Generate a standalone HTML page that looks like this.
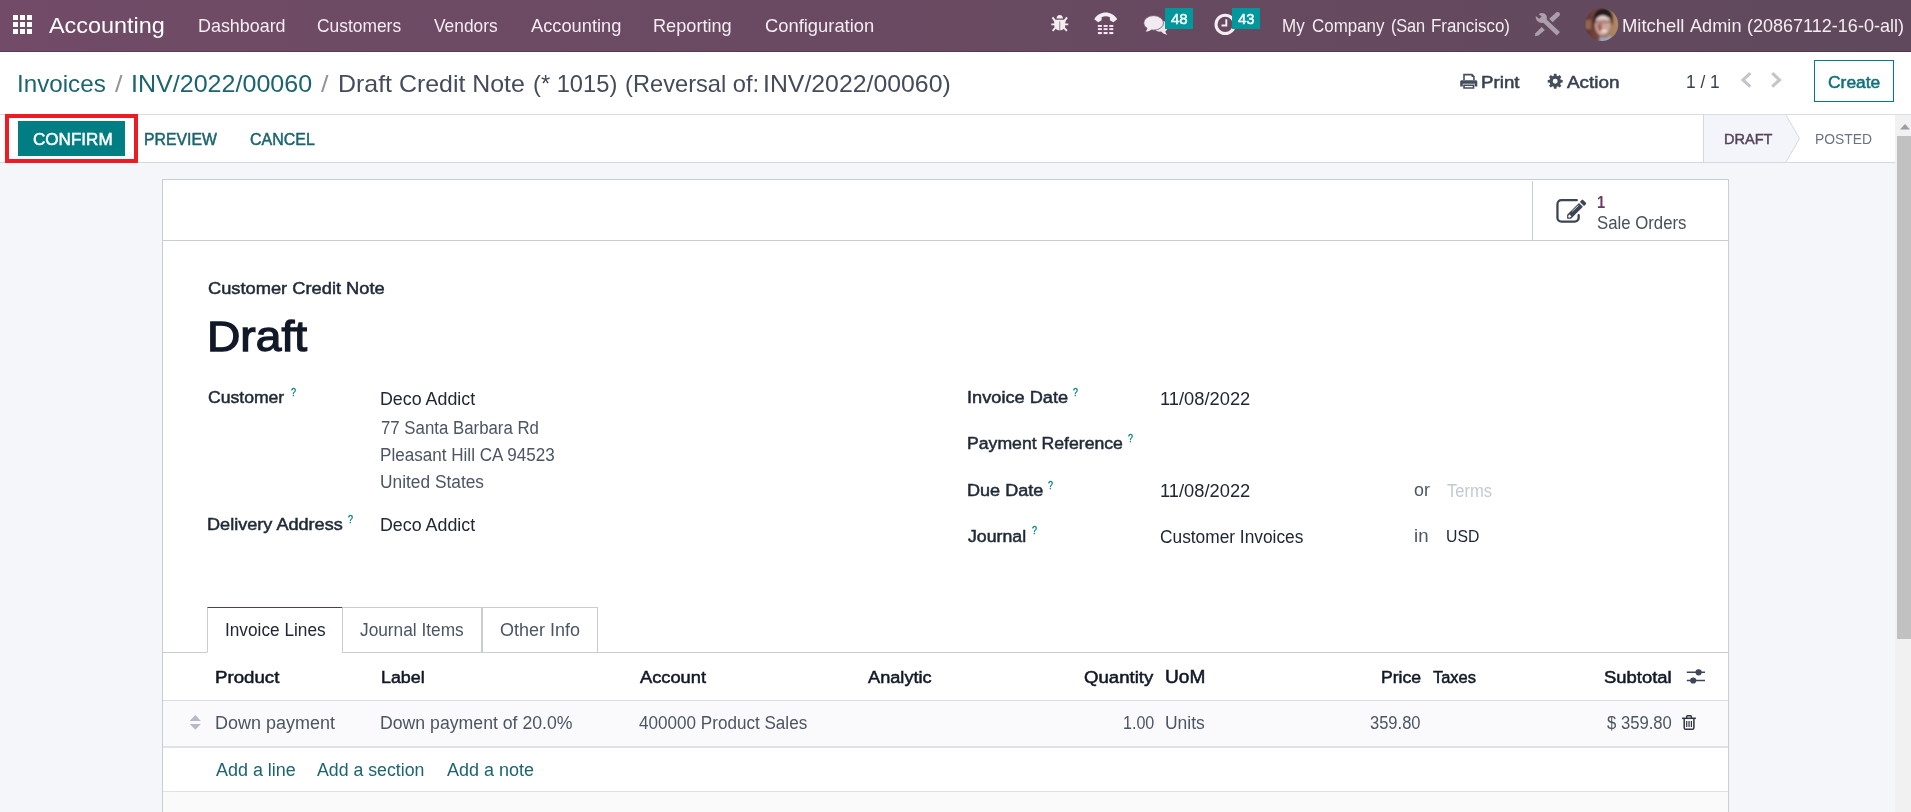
<!DOCTYPE html>
<html lang="en"><head><meta charset="utf-8"><title>Odoo - Draft Credit Note</title>
<style>
*{box-sizing:border-box;margin:0;padding:0}
html,body{width:1911px;height:812px;overflow:hidden;background:#f5f6fa;font-family:"Liberation Sans",sans-serif}
body{position:relative}
.t{position:absolute;white-space:pre;line-height:1;transform-origin:0 0;font-family:"Liberation Sans",sans-serif}
.b{position:absolute}
svg{position:absolute;overflow:visible}
.sb{-webkit-text-stroke:.03em currentColor}

</style></head>
<body>
<!-- navbar -->
<div class="b" style="left:0;top:0;width:1911px;height:52px;background:linear-gradient(to right,#714b67 0%,#60495c 100%);border-bottom:1px solid rgba(40,10,35,.28)"></div>
<!-- apps icon -->
<svg style="left:13px;top:15px" width="19" height="19" viewBox="0 0 19 19" fill="#fff">
<rect x="0" y="0" width="5" height="5"/><rect x="7" y="0" width="5" height="5"/><rect x="14" y="0" width="5" height="5"/>
<rect x="0" y="7" width="5" height="5"/><rect x="7" y="7" width="5" height="5"/><rect x="14" y="7" width="5" height="5"/>
<rect x="0" y="14" width="5" height="5"/><rect x="7" y="14" width="5" height="5"/><rect x="14" y="14" width="5" height="5"/>
</svg>


<!-- navbar icons (page coordinates) -->
<svg style="left:0;top:0" width="1911" height="52" viewBox="0 0 1911 52">
 <!-- bug -->
 <g fill="#f4eef2" stroke="#f4eef2">
  <path d="M1056.6 18.6A3.1 3.6 0 0 1 1062.9 18.6Z" stroke="none"/>
  <path d="M1054.2 19.800H1065.3V24.800C1065.3 28.300 1062.900 30.300 1059.750 30.300C1056.600 30.300 1054.200 28.300 1054.200 24.800Z" stroke="none"/>
  <g stroke-width="1.9" fill="none" stroke-linecap="butt">
   <path d="M1055.3 21.4L1052.5 17.400M1064.2 21.4L1067 17.400"/>
   <path d="M1051.3 24.4H1055M1064.5 24.4H1068.2"/>
   <path d="M1055.8 27.3L1052.6 30.9M1063.7 27.3L1066.9 30.9"/>
  </g>
 </g>
 <path d="M1059.75 21.6V30" stroke="#a58b7f" stroke-width="1.1" fill="none"/>
 <!-- phone -->
 <g fill="#f4eef2">
  <path d="M1094.3 19.2C1099.5 10.4 1111.9 10.4 1117.2 19.2L1113.4 22.2L1109.9 20.3V17.2C1107.5 16 1104 16 1101.6 17.2V20.3L1098.1 22.2Z"/>
  <g fill="#fbeaf3">
  <rect x="1097.9" y="25" width="4" height="1.9"/><rect x="1103.6" y="25" width="4" height="1.9"/><rect x="1109.3" y="25" width="4" height="1.9"/>
  <rect x="1097.9" y="28.2" width="4" height="1.9"/><rect x="1103.6" y="28.2" width="4" height="1.9"/><rect x="1109.3" y="28.2" width="4" height="1.9"/>
  <rect x="1097.9" y="32" width="4" height="2.1"/><rect x="1103.6" y="32" width="4" height="2.1"/><rect x="1109.3" y="32" width="4" height="2.1"/>
  </g>
 </g>
 <!-- comments -->
 <g fill="#f1eaf0">
  <path d="M1152.5 24.5C1152.5 29.5 1157 32.2 1161.2 31.6C1162.6 33.3 1164.8 34.5 1167.3 34.9C1166.2 33.8 1165.6 32.6 1165.4 31.2C1167 30 1168 28.4 1168 26.5C1168 22.5 1164 20.6 1160 20.6Z" fill="#efe6ed"/>
  <ellipse cx="1153.6" cy="22.9" rx="9.9" ry="7.3" stroke="#6a4a62" stroke-width="0.8"/>
  <path d="M1147.6 27.5C1147.4 29.2 1146.5 30.5 1145.6 31.6C1148 31.4 1150.2 30.6 1151.8 29.2Z"/>
 </g>
 <!-- clock -->
 <circle cx="1225.2" cy="24.4" r="9.2" fill="none" stroke="#f4eef2" stroke-width="3"/>
 <path d="M1226.3 19.2V25.5H1221.5" fill="none" stroke="#f4eef2" stroke-width="1.9"/>
 <!-- studio icon -->
 <g fill="#ab9fab">
  <path d="M1538.6 14.2C1541 12.4 1544.6 12.6 1546.2 15.3C1547 16.8 1547 18.2 1546.6 19.4L1559.9 31.9L1556.8 35.6L1543.3 22.8C1541.7 23.3 1539.6 23 1538 21.6C1536.3 20.1 1535.4 18 1535.8 15.9L1539.2 18.8L1541.8 16.6Z"/>
  <path d="M1556.4 12.2C1557.9 11.4 1559.6 12.3 1559.9 13.7C1560.1 14.6 1559.9 15.2 1559.4 15.8L1552.6 22.2L1549.2 18.8Z"/>
  <path d="M1541.6 26.9L1544.9 30L1538.4 35.4L1534.9 36.3L1535.4 33.2Z"/>
 </g>
 <!-- avatar -->
 <defs><filter id="avblur" x="-10%" y="-10%" width="120%" height="120%"><feGaussianBlur stdDeviation="0.9"/></filter><clipPath id="av"><circle cx="1601.7" cy="24.4" r="16.5"/></clipPath>
 <linearGradient id="avbg" x1="0" x2="1" y1="0" y2="0"><stop offset="0" stop-color="#5a2f30"/><stop offset=".45" stop-color="#7a4a3f"/><stop offset=".7" stop-color="#a9805f"/><stop offset="1" stop-color="#b58d68"/></linearGradient></defs>
 <g clip-path="url(#av)">
  <g filter="url(#avblur)">
  <rect x="1581" y="3" width="42" height="43" fill="url(#avbg)"/>
  <rect x="1585" y="20" width="6" height="9" fill="#a37a5c" opacity=".7"/>
  <path d="M1594 25C1591.500 12 1598.500 7.500 1604.500 8.200C1611.500 9 1614 15 1612.800 26L1610 18C1606 14.500 1599.500 14.500 1596.500 19Z" fill="#241a20"/>
  <ellipse cx="1602.600" cy="25.500" rx="7.600" ry="10.200" fill="#c9a599"/>
  <path d="M1595.500 20.500C1598 14.500 1607.500 14.500 1610 20.500C1607 18.300 1599 18.300 1595.500 20.500Z" fill="#e4d6d2"/>
  <path d="M1595.500 22.300H1610" stroke="#6a4a48" stroke-width="1.500" opacity=".65"/>
  <path d="M1597 24.500L1601.500 23.500L1602 31.500L1598.500 30.500Z" fill="#9b3f3c" opacity=".75"/>
  <ellipse cx="1604" cy="31" rx="3" ry="1.500" fill="#ecdedb"/>
  <path d="M1599 43L1600 36C1602.500 38.200 1607 37.800 1609.500 34.800L1615.500 43Z" fill="#a2a4b6"/>
  </g>
 </g>
</svg>

<!-- badges -->
<div class="b" style="left:1165px;top:8px;width:28px;height:21px;background:#00979d"></div>
<div class="b" style="left:1232px;top:8px;width:28px;height:21px;background:#00979d"></div>

<!-- control panel -->
<div class="b" style="left:0;top:52px;width:1911px;height:63px;background:#fff;border-bottom:1px solid #d9dce1"></div>

<!-- control panel icons -->
<svg style="left:0;top:52px" width="1911" height="63" viewBox="0 52 1911 63">
 <!-- print -->
 <g fill="#444e5c">
  <path d="M1463.200 73.800H1472.300L1474.700 76.200V80H1473.100V77H1471.500V75.400H1464.800V80H1463.200Z"/>
  <path d="M1461.700 80.300H1475.800C1476.700 80.300 1477.300 81 1477.300 81.800V86.600H1474.700V83.800H1462.800V86.600H1460.200V81.800C1460.200 81 1460.800 80.300 1461.700 80.300Z"/>
  <path d="M1463.200 84.600H1474.300V88.800H1463.200ZM1464.800 86V87.300H1472.700V86Z" fill-rule="evenodd"/>
 </g>
 <!-- gear -->
 <g transform="translate(1555.200 81.300)" fill="#444e5c">
  <path fill-rule="evenodd" d="M-1.47 -5.51L-1.29 -7.49L1.29 -7.49L1.47 -5.51L2.86 -4.93L4.39 -6.21L6.21 -4.39L4.93 -2.86L5.51 -1.47L7.49 -1.29L7.49 1.29L5.51 1.47L4.93 2.86L6.21 4.39L4.39 6.21L2.86 4.93L1.47 5.51L1.29 7.49L-1.29 7.49L-1.47 5.51L-2.86 4.93L-4.39 6.21L-6.21 4.39L-4.93 2.86L-5.51 1.47L-7.49 1.29L-7.49 -1.29L-5.51 -1.47L-4.93 -2.86L-6.21 -4.39L-4.39 -6.21L-2.86 -4.93ZM0 -2.45A2.45 2.45 0 1 0 0 2.45A2.45 2.45 0 1 0 0 -2.45Z"/>
 </g>
 <!-- pager chevrons -->
 <g fill="none" stroke="#c4c4cc" stroke-width="3.1" stroke-linejoin="miter">
  <path d="M1750.300 73.200L1743 79.950L1750.300 86.700"/>
  <path d="M1772.200 73.200L1779.500 79.950L1772.200 86.700"/>
 </g>
</svg>

<!-- create button -->
<div class="b" style="left:1814px;top:60px;width:80px;height:42px;border:1px solid #017e84;background:#fff"></div>

<!-- status bar -->
<div class="b" style="left:0;top:115px;width:1895px;height:48px;background:#fff;border-bottom:1px solid #d5d8de"></div>
<!-- red highlight -->
<div class="b" style="left:5px;top:114px;width:132.9px;height:48.6px;border:4.8px solid #ed1c24"></div>
<!-- confirm button -->
<div class="b" style="left:18px;top:121.2px;width:107px;height:34.4px;background:#017e84"></div>
<!-- status pills -->
<div class="b" style="left:1703px;top:115px;width:192px;height:47px;background:#fff;border-left:1px solid #d5d8de"></div>
<svg style="left:1703px;top:115px" width="100" height="47" viewBox="0 0 100 47">
<path d="M1 0H83L96.5 23.5L83 47H1Z" fill="#f4f5fa"/>
<path d="M83 0L96.5 23.5L83 47" fill="none" stroke="#d5d8de" stroke-width="1"/>
</svg>

<!-- scrollbar -->
<div class="b" style="left:1895px;top:115px;width:16px;height:697px;background:#f1f1f1"></div>
<div class="b" style="left:1897px;top:136px;width:14px;height:503px;background:#c1c1c1"></div>
<svg style="left:1900px;top:124px" width="10" height="6" viewBox="0 0 10 6"><path d="M0 5.5L5 0L10 5.5Z" fill="#a19ba5"/></svg>

<!-- sheet -->
<div class="b" style="left:162px;top:179px;width:1567px;height:640px;background:#fff;border:1px solid #c8ccd3"></div>
<!-- button box bottom -->
<div class="b" style="left:163px;top:240px;width:1565px;height:1px;background:#c8ccd3"></div>
<div class="b" style="left:1532px;top:181px;width:1px;height:59px;background:#c8ccd3"></div>

<!-- tabs -->
<div class="b" style="left:163px;top:652px;width:1565px;height:1px;background:#c8ccd3"></div>
<div class="b" style="left:207px;top:607px;width:136px;height:46px;background:#fff;border:1px solid #c8ccd3;border-top:1px solid #5a3b53;border-bottom:1px solid #fff"></div>
<div class="b" style="left:342px;top:607px;width:140px;height:46px;border:1px solid #c8ccd3"></div>
<div class="b" style="left:482px;top:607px;width:116px;height:46px;border:1px solid #c8ccd3"></div>

<!-- table -->
<div class="b" style="left:163px;top:700px;width:1565px;height:1px;background:#d9dce1"></div>
<div class="b" style="left:163px;top:701px;width:1565px;height:45px;background:#fafafc"></div>
<div class="b" style="left:163px;top:746px;width:1565px;height:2px;background:#dfe2e7"></div>
<div class="b" style="left:163px;top:791px;width:1565px;height:1px;background:#dfe2e7"></div>
<div class="b" style="left:163px;top:792px;width:1565px;height:20px;background:#fafafb"></div>

<!-- sheet icons -->
<svg style="left:0;top:180px" width="1911" height="632" viewBox="0 180 1911 632">
 <!-- pencil-square-o -->
 <g>
  <path d="M1576.800 200.200H1561.400A3.950 3.950 0 0 0 1557.450 204.150V217.750A3.950 3.950 0 0 0 1561.400 221.700H1574.700A3.950 3.950 0 0 0 1578.650 217.750V215.200" fill="none" stroke="#3d4452" stroke-width="2.3" stroke-linecap="round"/>
  <path d="M1567.100 214.800L1579 202.900L1582.900 206.800L1571 218.700H1567.100Z" fill="#3d4452"/>
  <path d="M1579.900 201.900L1581.500 200.200C1582 199.600 1582.800 199.600 1583.400 200.200L1585.700 202.500C1586.300 203.100 1586.300 203.900 1585.700 204.400L1584 206.100Z" fill="#3d4452"/>
  <path d="M1568.300 215.700L1569.600 214.500L1571.300 216.200L1570.100 217.500H1568.300Z" fill="#fff"/>
  <path d="M1572.300 211.300L1578.500 205.400" stroke="#fff" stroke-width=".8" fill="none"/>
 </g>
 <!-- row handle -->
 <path d="M195.300 715.100L200.900 720.900H189.700ZM189.700 724H200.900L195.300 729.700Z" fill="#b4bac6"/>
 <!-- optional columns sliders -->
 <g stroke="#3f4757" stroke-width="1.5" fill="#3f4757">
  <path d="M1686.800 672.300H1705M1686.800 680.500H1705" fill="none"/>
  <circle cx="1698.600" cy="672.300" r="2.600" stroke="none" /><circle cx="1698.600" cy="672.300" r="3.100" stroke="none"/>
  <circle cx="1693.200" cy="680.500" r="3.100" stroke="none"/>
 </g>
 <!-- trash -->
 <g fill="none" stroke="#2f3542" stroke-width="1.500">
  <path d="M1682.100 718.300H1695.900"/>
  <path d="M1686.700 718V716.600C1686.700 716 1687.100 715.700 1687.600 715.700H1690.500C1691 715.700 1691.400 716 1691.400 716.600V718"/>
  <path d="M1684.200 718.600V727.700C1684.200 728.700 1684.900 729.300 1685.800 729.300H1692.300C1693.200 729.300 1693.900 728.700 1693.900 727.700V718.600"/>
  <path d="M1686.700 721V727M1689.050 721V727M1691.400 721V727" stroke-width="1.200"/>
 </g>
</svg>

<!-- text layer -->
<span id="brand" class="t" style="left:49.20px;top:15px;font-size:21.8px;color:#ffffff;transform:scaleX(1.0738)">Accounting</span>
<span id="m1" class="t" style="left:197.52px;top:17px;font-size:18.2px;color:#f3edf1;transform:scaleX(0.9843)">Dashboard</span>
<span id="m2" class="t" style="left:317.00px;top:17px;font-size:18.2px;color:#f3edf1;transform:scaleX(0.9564)">Customers</span>
<span id="m3" class="t" style="left:434.30px;top:17px;font-size:18.2px;color:#f3edf1;transform:scaleX(0.9543)">Vendors</span>
<span id="m4" class="t" style="left:531.30px;top:17px;font-size:18.2px;color:#f3edf1;transform:scaleX(1.0037)">Accounting</span>
<span id="m5" class="t" style="left:653.40px;top:17px;font-size:18.2px;color:#f3edf1;transform:scaleX(0.9981)">Reporting</span>
<span id="m6" class="t" style="left:764.70px;top:17px;font-size:18.2px;color:#f3edf1;transform:scaleX(1.0096)">Configuration</span>
<span id="b48" class="t sb" style="left:1171.00px;top:12px;font-size:14.6px;color:#ffffff;transform:scaleX(1.0300)">48</span>
<span id="b43" class="t sb" style="left:1238.10px;top:12px;font-size:14.6px;color:#ffffff;transform:scaleX(1.0114)">43</span>
<span id="comp1" class="t" style="left:1281.56px;top:17px;font-size:18.2px;color:#f3edf1;transform:scaleX(0.9358)">My</span>
<span id="comp2" class="t" style="left:1312.20px;top:17px;font-size:18.2px;color:#f3edf1;transform:scaleX(0.9309)">Company</span>
<span id="comp3" class="t" style="left:1391.30px;top:17px;font-size:18.2px;color:#f3edf1;transform:scaleX(0.9000);letter-spacing:-0.138px">(San</span>
<span id="comp4" class="t" style="left:1430.67px;top:17px;font-size:18.2px;color:#f3edf1;transform:scaleX(0.9296)">Francisco)</span>
<span id="user1" class="t" style="left:1622.49px;top:17px;font-size:18.2px;color:#f3edf1;transform:scaleX(1.0133)">Mitchell</span>
<span id="user2" class="t" style="left:1690.40px;top:17px;font-size:18.2px;color:#f3edf1;transform:scaleX(0.9993)">Admin</span>
<span id="user3" class="t" style="left:1746.91px;top:17px;font-size:18.2px;color:#f3edf1;transform:scaleX(0.9908)">(20867112-16-0-all)</span>
<span id="bc1" class="t" style="left:17.05px;top:73px;font-size:23.6px;color:#1b6470;transform:scaleX(1.0256)">Invoices</span>
<span id="bs1" class="t" style="left:114.50px;top:73px;font-size:23.6px;color:#8f959e;transform:scaleX(1.1429)">/</span>
<span id="bc2" class="t" style="left:130.58px;top:73px;font-size:23.6px;color:#1b6470;transform:scaleX(1.0623)">INV/2022/00060</span>
<span id="bs2" class="t" style="left:321.00px;top:73px;font-size:23.6px;color:#8f959e;transform:scaleX(1.1429)">/</span>
<span id="bc3a" class="t" style="left:338.44px;top:73px;font-size:23.6px;color:#444b5a;transform:scaleX(1.0558)">Draft Credit Note</span>
<span id="bc3b" class="t" style="left:533.40px;top:73px;font-size:23.6px;color:#444b5a;transform:scaleX(1.0039)">(* 1015)</span>
<span id="bc3c" class="t" style="left:625.00px;top:73px;font-size:23.6px;color:#444b5a;transform:scaleX(1.0032)">(Reversal of:</span>
<span id="bc3d" class="t" style="left:763.10px;top:73px;font-size:23.6px;color:#444b5a;transform:scaleX(1.0522)">INV/2022/00060)</span>
<span id="print" class="t sb" style="left:1480.92px;top:74px;font-size:17.4px;color:#374151;transform:scaleX(1.0766)">Print</span>
<span id="action" class="t sb" style="left:1567.00px;top:74px;font-size:17.4px;color:#374151;transform:scaleX(1.0868)">Action</span>
<span id="pager" class="t" style="left:1685.73px;top:74px;font-size:17.8px;color:#374151;transform:scaleX(0.9730)">1 / 1</span>
<span id="create" class="t sb" style="left:1828.40px;top:74px;font-size:17.4px;color:#0f7078;transform:scaleX(1.0014)">Create</span>
<span id="confirm" class="t sb" style="left:32.70px;top:132px;font-size:16.8px;color:#ffffff;transform:scaleX(1.0165)">CONFIRM</span>
<span id="preview" class="t sb" style="left:143.55px;top:132px;font-size:16.6px;color:#1b6470;transform:scaleX(0.9530)">PREVIEW</span>
<span id="cancel" class="t sb" style="left:250.00px;top:132px;font-size:16.6px;color:#1b6470;transform:scaleX(0.9629)">CANCEL</span>
<span id="sdraft" class="t sb" style="left:1724.25px;top:131px;font-size:15.3px;color:#54455a;transform:scaleX(0.9488)">DRAFT</span>
<span id="sposted" class="t" style="left:1815.49px;top:131px;font-size:15.3px;color:#6b7280;transform:scaleX(0.9070)">POSTED</span>
<span id="stat1" class="t" style="left:1596.53px;top:195px;font-size:16.8px;color:#6b3a5e;transform:scaleX(0.8750);font-weight:700">1</span>
<span id="stat2" class="t" style="left:1597.30px;top:215px;font-size:17.6px;color:#495057;transform:scaleX(0.9535)">Sale Orders</span>
<span id="ttl" class="t sb" style="left:207.70px;top:280px;font-size:17.2px;color:#1f2937;transform:scaleX(1.0631)">Customer Credit Note</span>
<span id="h1" class="t sb" style="left:207.01px;top:315px;font-size:43.4px;color:#111827;transform:scaleX(1.0641)">Draft</span>
<span id="l1" class="t sb" style="left:208.30px;top:389px;font-size:17.2px;color:#1f2937;transform:scaleX(1.0231)">Customer</span>
<span id="q1" class="t sb" style="left:290.70px;top:387px;font-size:11.5px;color:#017e84;transform:scaleX(0.7833)">?</span>
<span id="v1" class="t" style="left:379.79px;top:391px;font-size:17.6px;color:#212733;transform:scaleX(1.0131)">Deco Addict</span>
<span id="v2" class="t" style="left:380.80px;top:420px;font-size:17.6px;color:#4b5563;transform:scaleX(0.9556)">77 Santa Barbara Rd</span>
<span id="v3" class="t" style="left:379.83px;top:447px;font-size:17.6px;color:#4b5563;transform:scaleX(0.9709)">Pleasant Hill CA 94523</span>
<span id="v4" class="t" style="left:379.82px;top:474px;font-size:17.6px;color:#4b5563;transform:scaleX(0.9845)">United States</span>
<span id="l2" class="t sb" style="left:207.25px;top:516px;font-size:17.2px;color:#1f2937;transform:scaleX(1.0529)">Delivery Address</span>
<span id="q2" class="t sb" style="left:348.00px;top:514px;font-size:11.5px;color:#017e84;transform:scaleX(0.7833)">?</span>
<span id="v5" class="t" style="left:379.79px;top:517px;font-size:17.6px;color:#212733;transform:scaleX(1.0131)">Deco Addict</span>
<span id="l3" class="t sb" style="left:967.24px;top:389px;font-size:17.2px;color:#1f2937;transform:scaleX(1.0587)">Invoice Date</span>
<span id="q3" class="t sb" style="left:1073.40px;top:387px;font-size:11.5px;color:#017e84;transform:scaleX(0.7667)">?</span>
<span id="v6" class="t" style="left:1160.36px;top:391px;font-size:17.6px;color:#212733;transform:scaleX(1.0404)">11/08/2022</span>
<span id="l4" class="t sb" style="left:967.27px;top:435px;font-size:17.2px;color:#1f2937;transform:scaleX(1.0263)">Payment Reference</span>
<span id="q4" class="t sb" style="left:1128.00px;top:433px;font-size:11.5px;color:#017e84;transform:scaleX(0.7833)">?</span>
<span id="l5" class="t sb" style="left:967.25px;top:482px;font-size:17.2px;color:#1f2937;transform:scaleX(1.0513)">Due Date</span>
<span id="q5" class="t sb" style="left:1047.70px;top:480px;font-size:11.5px;color:#017e84;transform:scaleX(0.7833)">?</span>
<span id="v7" class="t" style="left:1160.36px;top:483px;font-size:17.6px;color:#212733;transform:scaleX(1.0404)">11/08/2022</span>
<span id="or" class="t" style="left:1413.90px;top:482px;font-size:17.6px;color:#4b5563;transform:scaleX(1.0136)">or</span>
<span id="terms" class="t" style="left:1447.00px;top:483px;font-size:17.6px;color:#c3cad2;transform:scaleX(0.9419)">Terms</span>
<span id="l6" class="t sb" style="left:968.30px;top:528px;font-size:17.2px;color:#1f2937;transform:scaleX(1.0315)">Journal</span>
<span id="q6" class="t sb" style="left:1031.50px;top:525px;font-size:11.5px;color:#017e84;transform:scaleX(0.7833)">?</span>
<span id="v8" class="t" style="left:1160.00px;top:529px;font-size:17.6px;color:#212733;transform:scaleX(0.9843)">Customer Invoices</span>
<span id="in" class="t" style="left:1413.94px;top:528px;font-size:17.6px;color:#4b5563;transform:scaleX(1.0580)">in</span>
<span id="usd" class="t" style="left:1445.54px;top:528px;font-size:16.4px;color:#212733;transform:scaleX(0.9624)">USD</span>
<span id="tab1" class="t" style="left:224.62px;top:622px;font-size:17.6px;color:#212733;transform:scaleX(0.9794)">Invoice Lines</span>
<span id="tab2" class="t" style="left:360.40px;top:622px;font-size:17.6px;color:#4b5563;transform:scaleX(0.9820)">Journal Items</span>
<span id="tab3" class="t" style="left:499.50px;top:622px;font-size:17.6px;color:#4b5563;transform:scaleX(1.0210)">Other Info</span>
<span id="h_prod" class="t sb" style="left:214.91px;top:669px;font-size:17.2px;color:#111827;transform:scaleX(1.0863)">Product</span>
<span id="h_label" class="t sb" style="left:380.96px;top:669px;font-size:17.2px;color:#111827;transform:scaleX(1.0389)">Label</span>
<span id="h_acc" class="t sb" style="left:640.00px;top:669px;font-size:17.2px;color:#111827;transform:scaleX(1.0621)">Account</span>
<span id="h_ana" class="t sb" style="left:867.50px;top:669px;font-size:17.2px;color:#111827;transform:scaleX(1.0580)">Analytic</span>
<span id="h_qty" class="t sb" style="left:1084.40px;top:669px;font-size:17.2px;color:#111827;transform:scaleX(1.0836)">Quantity</span>
<span id="h_uom" class="t sb" style="left:1165.24px;top:668px;font-size:18.0px;color:#111827;transform:scaleX(1.0608)">UoM</span>
<span id="h_price" class="t sb" style="left:1380.98px;top:669px;font-size:17.2px;color:#111827;transform:scaleX(1.0239)">Price</span>
<span id="h_tax" class="t sb" style="left:1432.60px;top:669px;font-size:17.2px;color:#111827;transform:scaleX(0.9570)">Taxes</span>
<span id="h_sub" class="t sb" style="left:1603.90px;top:669px;font-size:17.2px;color:#111827;transform:scaleX(1.0715)">Subtotal</span>
<span id="r_prod" class="t" style="left:214.98px;top:715px;font-size:17.6px;color:#4b5563;transform:scaleX(1.0218)">Down payment</span>
<span id="r_label" class="t" style="left:380.40px;top:715px;font-size:17.6px;color:#4b5563;transform:scaleX(1.0045)">Down payment of 20.0%</span>
<span id="r_acc" class="t" style="left:638.80px;top:715px;font-size:17.6px;color:#4b5563;transform:scaleX(0.9715)">400000 Product Sales</span>
<span id="r_qty" class="t" style="left:1122.69px;top:715px;font-size:17.6px;color:#4b5563;transform:scaleX(0.9146)">1.00</span>
<span id="r_uom" class="t" style="left:1164.51px;top:715px;font-size:17.6px;color:#4b5563;transform:scaleX(0.9927)">Units</span>
<span id="r_price" class="t" style="left:1370.30px;top:715px;font-size:17.6px;color:#4b5563;transform:scaleX(0.9384)">359.80</span>
<span id="r_sub" class="t" style="left:1606.60px;top:715px;font-size:17.6px;color:#4b5563;transform:scaleX(0.9476)">$ 359.80</span>
<span id="a1" class="t" style="left:215.50px;top:762px;font-size:17.6px;color:#1b6470;transform:scaleX(1.0198)">Add a line</span>
<span id="a2" class="t" style="left:317.20px;top:762px;font-size:17.6px;color:#1b6470;transform:scaleX(1.0073)">Add a section</span>
<span id="a3" class="t" style="left:447.00px;top:762px;font-size:17.6px;color:#1b6470;transform:scaleX(1.0223)">Add a note</span>
</body></html>
